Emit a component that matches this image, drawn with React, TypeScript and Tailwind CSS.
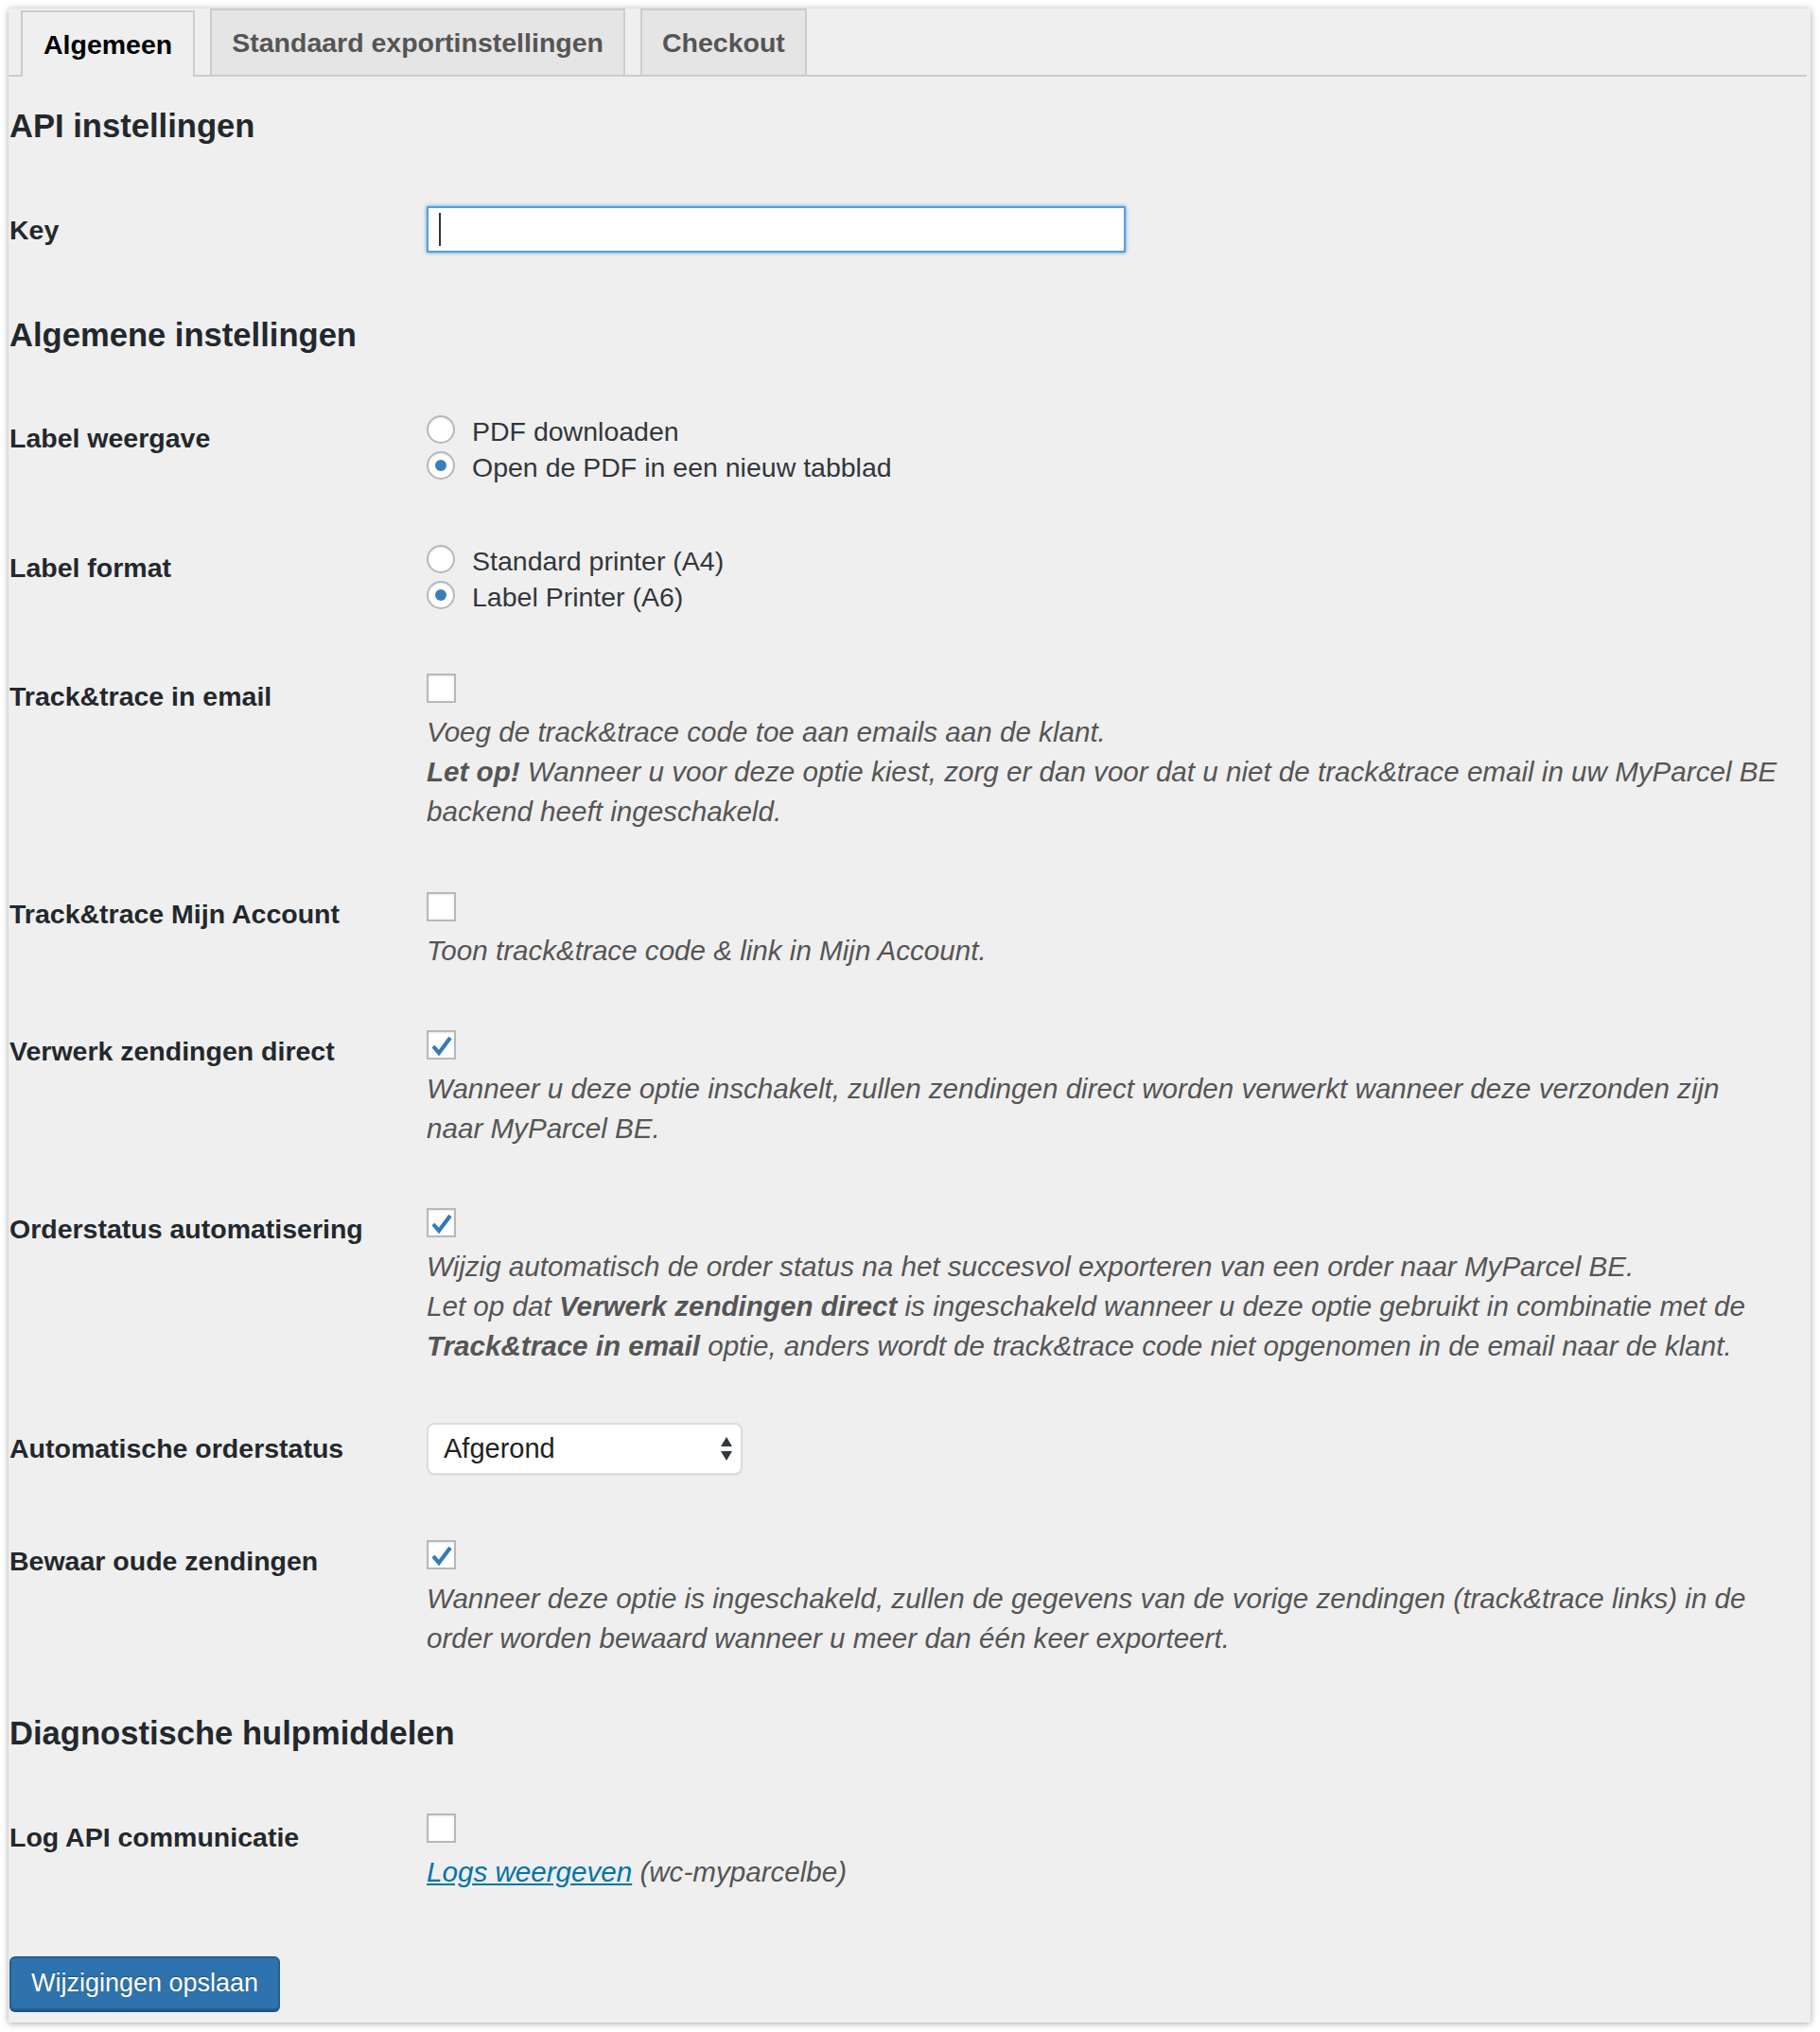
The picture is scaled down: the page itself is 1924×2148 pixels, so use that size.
import React from "react";

const Checkbox = ({ checked }: { checked?: boolean }) => (
  <div className="w-[31px] h-[31px] border-2 border-[#b4b9be] bg-white shadow-[inset_0_1px_2px_rgba(0,0,0,0.1)] flex items-center justify-center">
    {checked && (
      <svg width="24" height="22" viewBox="0 0 24 22">
        <path d="M3 12 L9 19 L21 3" fill="none" stroke="#337ab7" strokeWidth="4.2" strokeLinecap="butt" strokeLinejoin="miter" />
      </svg>
    )}
  </div>
);

const Radio = ({ checked, label }: { checked?: boolean; label: string }) => (
  <div className="flex items-center h-[38px]">
    <div className="w-[30px] h-[30px] rounded-full border-2 border-[#b4b9be] bg-white shadow-[inset_0_1px_2px_rgba(0,0,0,0.1)] flex items-center justify-center">
      {checked && <div className="w-[12px] h-[12px] rounded-full bg-[#3a7fb7]" />}
    </div>
    <span className="ml-[18px] pt-[3px] text-[28.5px] leading-[38px] text-[#32373c] whitespace-nowrap">{label}</span>
  </div>
);

const Label = ({ children, first }: { children: React.ReactNode; first?: boolean }) => (
  <div
    className={
      first
        ? "w-[441px] shrink-0 pt-[37px] text-[28.5px] leading-[36px] font-bold text-[#23282d] whitespace-nowrap"
        : "w-[441px] shrink-0 pt-[40px] text-[28.5px] leading-[36px] font-bold text-[#23282d] whitespace-nowrap"
    }
  >
    {children}
  </div>
);

const Desc = ({ children }: { children: React.ReactNode }) => (
  <div className="mt-[10px] text-[29.6px] leading-[42px] italic text-[#555] whitespace-nowrap">{children}</div>
);

export default function App() {
  return (
    <div className="min-h-[2148px] bg-white pt-[9px] pl-[9px] font-['Liberation_Sans',Arial,sans-serif]">
      <div className="w-[1905px] h-[2129px] bg-[#efefef] shadow-[0_1px_7px_rgba(0,0,0,0.35)] relative">
        {/* Tabs */}
        <div className="flex items-end gap-[16px] pl-[13px] pt-[1px] h-[72px] border-b-2 border-[#ccc] mr-[4px]">
          <div className="h-[70px] -mb-[2px] px-[22px] border-2 border-b-0 border-[#ccc] bg-[#efefef] text-black text-[28.5px] font-bold flex items-center">
            Algemeen
          </div>
          <div className="h-[70px] px-[21px] border-2 border-b-0 border-[#ccc] bg-[#e5e5e5] text-[#555] text-[28.5px] font-bold flex items-center">
            Standaard exportinstellingen
          </div>
          <div className="h-[70px] px-[21px] border-2 border-b-0 border-[#ccc] bg-[#e5e5e5] text-[#555] text-[28.5px] font-bold flex items-center">
            Checkout
          </div>
        </div>

        <div className="pl-[1px]">
          <h2 className="mt-[30px] mb-[33px] text-[34.6px] leading-[44px] font-bold text-[#23282d]">API instellingen</h2>

          {/* Key */}
          <div className="flex h-[112px]">
            <Label first>Key</Label>
            <div className="pt-[30px]">
              <div className="w-[739px] h-[49px] bg-white border-2 border-[#5b9dd9] shadow-[0_0_4px_rgba(30,140,190,0.8)] flex items-center pl-[11px]">
                <div className="w-[2px] h-[35px] bg-[#333]" />
              </div>
            </div>
          </div>

          <h2 className="mt-[32px] mb-[29px] text-[34.6px] leading-[44px] font-bold text-[#23282d]">Algemene instellingen</h2>

          {/* Label weergave */}
          <div className="flex h-[137px]">
            <Label>Label weergave</Label>
            <div className="pt-[30px]">
              <Radio label="PDF downloaden" />
              <Radio checked label="Open de PDF in een nieuw tabblad" />
            </div>
          </div>

          {/* Label format */}
          <div className="flex h-[136px]">
            <Label>Label format</Label>
            <div className="pt-[30px]">
              <Radio label="Standard printer (A4)" />
              <Radio checked label="Label Printer (A6)" />
            </div>
          </div>

          {/* Track&trace in email */}
          <div className="flex h-[230px]">
            <Label>Track&amp;trace in email</Label>
            <div className="pt-[34px]">
              <Checkbox />
              <Desc>
                Voeg de track&amp;trace code toe aan emails aan de klant.
                <br />
                <b>Let op!</b> Wanneer u voor deze optie kiest, zorg er dan voor dat u niet de track&amp;trace email in uw MyParcel BE
                <br />
                backend heeft ingeschakeld.
              </Desc>
            </div>
          </div>

          {/* Mijn Account */}
          <div className="flex h-[145px]">
            <Label>Track&amp;trace Mijn Account</Label>
            <div className="pt-[35px]">
              <Checkbox />
              <Desc>Toon track&amp;trace code &amp; link in Mijn Account.</Desc>
            </div>
          </div>

          {/* Verwerk */}
          <div className="flex h-[188px]">
            <Label>Verwerk zendingen direct</Label>
            <div className="pt-[36px]">
              <Checkbox checked />
              <Desc>
                Wanneer u deze optie inschakelt, zullen zendingen direct worden verwerkt wanneer deze verzonden zijn
                <br />
                naar MyParcel BE.
              </Desc>
            </div>
          </div>

          {/* Orderstatus */}
          <div className="flex h-[232px]">
            <Label>Orderstatus automatisering</Label>
            <div className="pt-[36px]">
              <Checkbox checked />
              <Desc>
                Wijzig automatisch de order status na het succesvol exporteren van een order naar MyParcel BE.
                <br />
                Let op dat <b>Verwerk zendingen direct</b> is ingeschakeld wanneer u deze optie gebruikt in combinatie met de
                <br />
                <b>Track&amp;trace in email</b> optie, anders wordt de track&amp;trace code niet opgenomen in de email naar de klant.
              </Desc>
            </div>
          </div>

          {/* Automatische orderstatus */}
          <div className="flex h-[119px]">
            <Label>Automatische orderstatus</Label>
            <div className="pt-[31px]">
              <div className="w-[334px] h-[55px] bg-white border-2 border-[#dcdcdc] rounded-[8px] shadow-[0_1px_1px_rgba(0,0,0,0.05)] flex items-center justify-between pl-[16px] pr-[8px]">
                <span className="text-[29px] text-[#222]">Afgerond</span>
                <svg width="14" height="28" viewBox="0 0 14 28">
                  <path d="M7 1 L13 11 L1 11 Z" fill="#32373c" />
                  <path d="M1 16 L13 16 L7 26 Z" fill="#32373c" />
                </svg>
              </div>
            </div>
          </div>

          {/* Bewaar */}
          <div className="flex h-[190px]">
            <Label>Bewaar oude zendingen</Label>
            <div className="pt-[36px]">
              <Checkbox checked />
              <Desc>
                Wanneer deze optie is ingeschakeld, zullen de gegevens van de vorige zendingen (track&amp;trace links) in de
                <br />
                order worden bewaard wanneer u meer dan één keer exporteert.
              </Desc>
            </div>
          </div>

          <h2 className="mt-[28px] mb-[30px] text-[34.6px] leading-[44px] font-bold text-[#23282d]">Diagnostische hulpmiddelen</h2>

          {/* Log */}
          <div className="flex h-[146px]">
            <Label>Log API communicatie</Label>
            <div className="pt-[33px]">
              <Checkbox />
              <Desc>
                <a className="text-[#0073aa] underline">Logs weergeven</a> (wc-myparcelbe)
              </Desc>
            </div>
          </div>

          <div className="mt-[38px]">
            <button className="h-[57px] px-[21px] bg-[#2e73ad] border-2 border-[#245f91] rounded-[6px] shadow-[0_2px_0_#1f5482] text-white text-[27px] [text-shadow:0_-1px_1px_#1c5280]">
              Wijzigingen opslaan
            </button>
          </div>
        </div>
      </div>
    </div>
  );
}
